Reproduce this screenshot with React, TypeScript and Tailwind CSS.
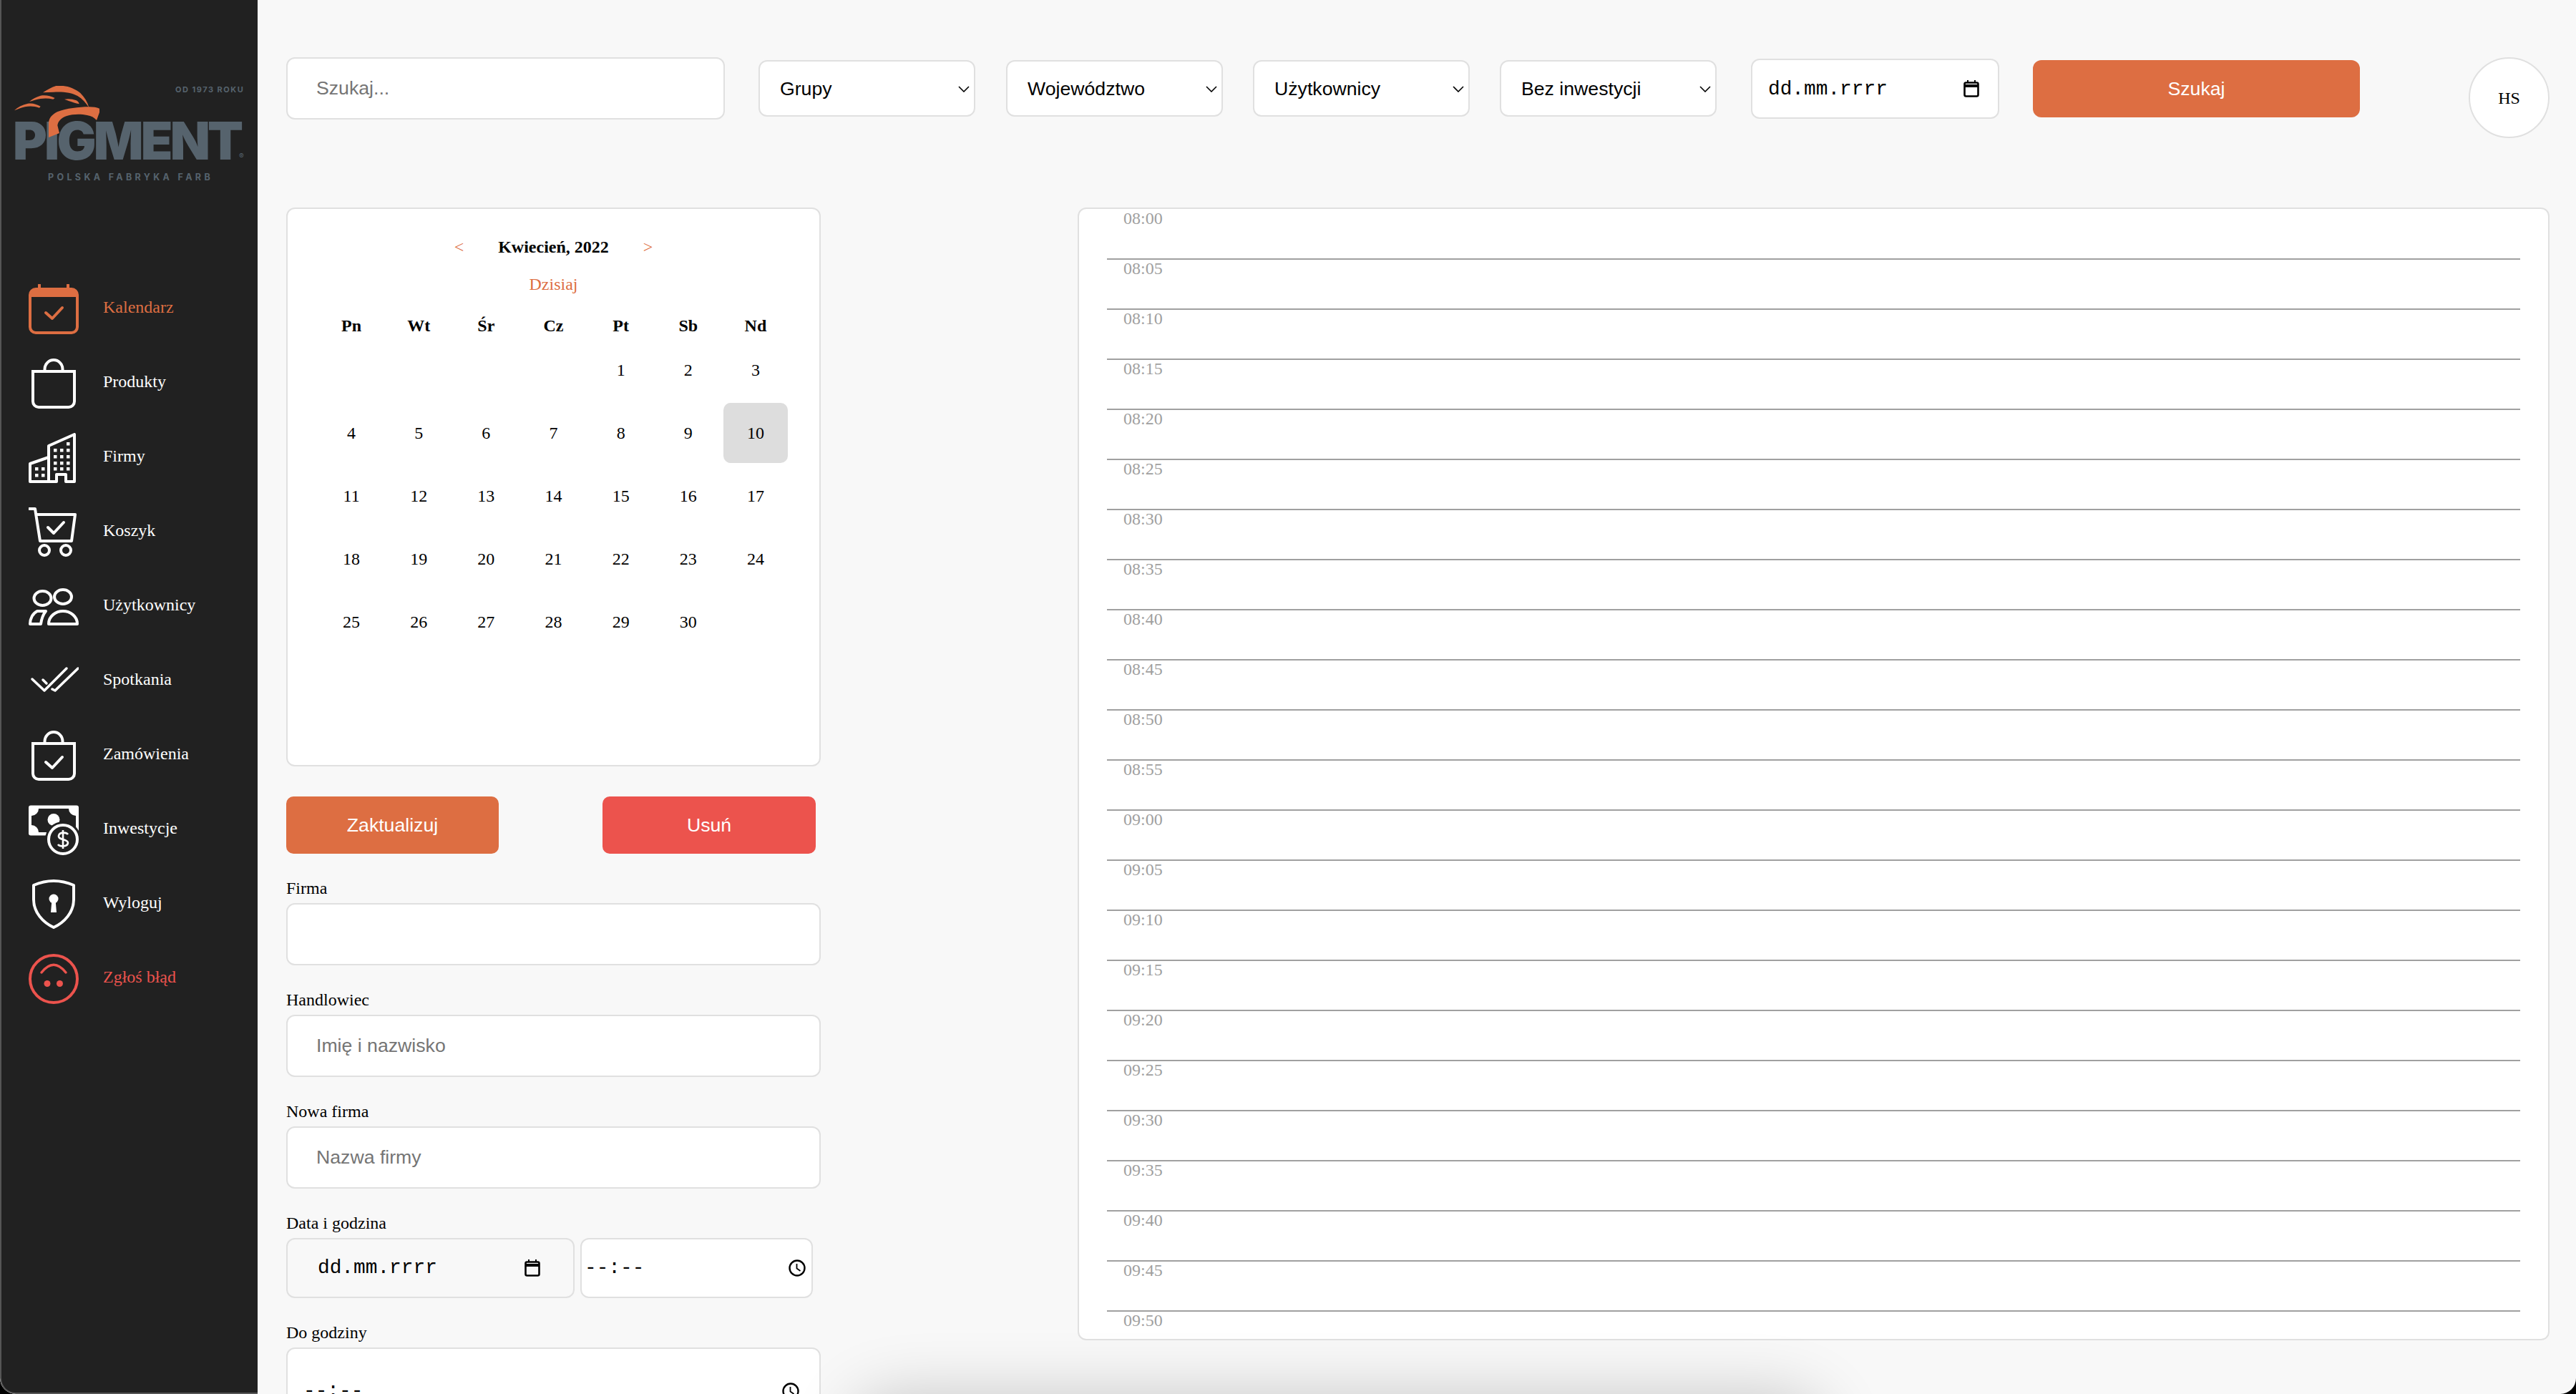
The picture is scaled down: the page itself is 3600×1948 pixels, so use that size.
import React from "react";

const ORANGE = "#dd6e42";

const CheckMark = ({ y = 0 }: { y?: number }) => (
  <path d="M24 40 L33 48 L47 33" transform={`translate(0 ${y})`} fill="none" stroke="currentColor" strokeWidth="4" strokeLinecap="round" strokeLinejoin="round" />
);

function IconBox({ children }: { children: React.ReactNode }) {
  return (
    <svg viewBox="0 0 70 70" className="w-[70px] h-[70px] shrink-0" fill="none" stroke="currentColor" strokeWidth="4">
      {children}
    </svg>
  );
}

const CalendarIcon = () => (
  <IconBox>
    <rect x="2" y="7" width="66" height="61" rx="8" />
    <path d="M2 15a8 8 0 0 1 8-8h50a8 8 0 0 1 8 8v3H2z" fill="currentColor" stroke="none" />
    <path d="M15 1v8M55 1v8" strokeLinecap="round" />
    <CheckMark />
  </IconBox>
);

const BagIcon = ({ check }: { check?: boolean }) => (
  <IconBox>
    <path d="M6 18H64V60a8 8 0 0 1-8 8H14a8 8 0 0 1-8-8Z" />
    <path d="M22.5 18V15a12.5 13 0 0 1 25 0V18" />
    {check && <CheckMark y={4} />}
  </IconBox>
);

const bigWindows = [
  [55, 15], [37, 24], [46, 24], [55, 24], [37, 33], [46, 33], [55, 33],
  [37, 42], [46, 42], [55, 42], [37, 50], [46, 50], [55, 50],
];
const smallWindows = [[11, 50], [20, 50], [11, 59], [20, 59]];

const BuildingIcon = () => (
  <IconBox>
    <path d="M2 68V43L28 34V18L64 2V68H52V58H39V68Z" strokeLinejoin="round" />
    <path d="M28 34V68" />
    {[...bigWindows, ...smallWindows].map(([x, y]) => (
      <rect key={`${x}-${y}`} x={x - 2} y={y - 2} width="4.5" height="4.5" fill="currentColor" stroke="none" />
    ))}
  </IconBox>
);

const CartIcon = () => (
  <IconBox>
    <path d="M1 2H9L16 47H60L65 10H11" strokeLinejoin="round" strokeLinecap="round" />
    <circle cx="22" cy="60" r="7" />
    <circle cx="52" cy="60" r="7" />
    <path d="M27 28L35 36L49 21" strokeLinecap="round" strokeLinejoin="round" />
  </IconBox>
);

const UsersIcon = () => (
  <IconBox>
    <ellipse cx="19.5" cy="23" rx="12" ry="10" />
    <ellipse cx="48" cy="21" rx="12" ry="10" />
    <path d="M2 59C2 51 6 44 12 41H24C20 46 18 52 17 59Z" strokeLinejoin="round" />
    <path d="M28 59C28 48 38 41 48 41C58 41 68 48 68 59Z" strokeLinejoin="round" />
  </IconBox>
);

const DoubleCheckIcon = () => (
  <IconBox>
    <g strokeWidth="3.5" strokeLinecap="round" strokeLinejoin="round">
      <path d="M5 32L22 48L53 17" />
      <path d="M33 46L37 48L69 17" />
      <path d="M20 33L25 38" />
    </g>
  </IconBox>
);

const MoneyIcon = () => (
  <IconBox>
    <g fill="currentColor" stroke="none">
      <rect x="0" y="0.5" width="70" height="42" rx="3" />
      <rect x="4" y="5" width="62" height="33" fill="#212121" />
      <path d="M4 5h10a10 10 0 0 1-10 10z" />
      <path d="M66 5h-10a10 10 0 0 0 10 10z" />
      <path d="M4 38h10a10 10 0 0 0-10-10z" />
      <circle cx="35" cy="20.5" r="8.5" />
      <circle cx="48" cy="48" r="25" fill="#212121" />
    </g>
    <circle cx="48" cy="48" r="20" />
    <path d="M55 41C53 38 43 37 42 43C41 49 55 47 55 53C54 59 43 58 41 55M48 35V61" strokeWidth="2.6" />
  </IconBox>
);

const ShieldIcon = () => (
  <IconBox>
    <path d="M35 2C44 2 56 5 63 8V28C63 46 50 60 35 67C20 60 7 46 7 28V8C14 5 26 2 35 2Z" strokeLinejoin="round" />
    <circle cx="35" cy="27" r="6.5" fill="currentColor" stroke="none" />
    <path d="M32.5 28H37.5L39 46H31Z" fill="currentColor" stroke="none" />
  </IconBox>
);

const BugFaceIcon = () => (
  <IconBox>
    <circle cx="35" cy="35" r="33" />
    <path d="M18 26Q35 4.5 52 26" strokeLinecap="round" strokeWidth="3.5" />
    <circle cx="26" cy="41.5" r="4.5" fill="currentColor" stroke="none" />
    <circle cx="43.5" cy="41.5" r="4.5" fill="currentColor" stroke="none" />
  </IconBox>
);

const navItems = [
  { label: "Kalendarz", icon: <CalendarIcon />, color: "text-[#dd6e42]" },
  { label: "Produkty", icon: <BagIcon />, color: "text-white" },
  { label: "Firmy", icon: <BuildingIcon />, color: "text-white" },
  { label: "Koszyk", icon: <CartIcon />, color: "text-white" },
  { label: "Użytkownicy", icon: <UsersIcon />, color: "text-white" },
  { label: "Spotkania", icon: <DoubleCheckIcon />, color: "text-white" },
  { label: "Zamówienia", icon: <BagIcon check />, color: "text-white" },
  { label: "Inwestycje", icon: <MoneyIcon />, color: "text-white" },
  { label: "Wyloguj", icon: <ShieldIcon />, color: "text-white" },
  { label: "Zgłoś błąd", icon: <BugFaceIcon />, color: "text-[#ec534d]" },
];

function Logo() {
  return (
    <div className="relative h-[397px] font-['Inter',sans-serif] text-[#56636d]">
      <span className="absolute left-[243px] top-[117px] text-[11px] leading-[16px] font-bold tracking-[1.5px] whitespace-nowrap">OD 1973 ROKU</span>
      <span className="absolute left-[16px] top-[153px] text-[73px] leading-[88px] font-black tracking-[-3.8px] whitespace-nowrap">PIGMENT</span>
      <span className="absolute left-[332px] top-[212px] text-[10px] leading-[12px]">®</span>
      <span className="absolute left-[65px] top-[240px] text-[12.5px] leading-[16px] font-bold tracking-[4.35px] whitespace-nowrap">POLSKA FABRYKA FARB</span>
      {/* eagle over the letters */}
      <svg viewBox="0 0 405 270" className="absolute left-[13px] top-[112px] w-[135px] h-[90px]" fill={ORANGE}>
        <path d="M15 127C30 112 50 103 72 98C90 95 108 100 125 110L120 116C100 109 80 108 60 112C44 116 30 122 15 127Z" />
        <path d="M78 90C92 78 108 70 125 65C145 61 168 66 185 75L178 80C160 76 142 75 125 78C108 81 94 86 78 90Z" />
        <path d="M135 52C150 42 170 30 190 24H220C245 26 272 38 292 54C310 72 322 92 328 115C316 96 300 78 280 66C255 52 220 48 180 50C165 50 150 51 135 52Z" />
        <path d="M225 80C240 77 258 78 275 85C282 89 286 94 287 100C272 98 258 92 245 88C238 85 232 83 225 80Z" />
        <path d="M328 112C345 112 360 114 372 119V135L360 168C352 158 338 150 320 147C295 142 260 142 235 150C212 158 198 172 196 190L204 222L159 240V180C160 160 172 145 195 133C235 118 285 112 328 112Z" />
      </svg>
    </div>
  );
}

function Sidebar() {
  return (
    <aside className="w-[360px] shrink-0 h-full bg-[#212121] border-l-2 border-b-2 border-[#555555] rounded-bl-[22px] overflow-hidden">
      <Logo />
      <nav className="flex flex-col gap-[34px] pl-[38px]">
        {navItems.map((item) => (
          <a key={item.label} className={`flex items-center h-[70px] ${item.color}`}>
            {item.icon}
            <span className="ml-[34px] text-[24px] leading-[28px] -mt-[6px]">{item.label}</span>
          </a>
        ))}
      </nav>
    </aside>
  );
}

const boxCls = "bg-white border-2 border-[#e0e0e0] rounded-[12px]";
const sansCls = "font-['Liberation_Sans',sans-serif] text-[26.67px]";
const monoCls = "font-['Liberation_Mono',monospace] text-[27.8px] text-black";

function Select({ label, className }: { label: string; className: string }) {
  return (
    <div className={`relative w-[303px] h-[79px] shrink-0 ${className}`}>
      <select className={`${boxCls} ${sansCls} appearance-none w-full h-full pl-[28px] text-black outline-none`}>
        <option>{label}</option>
      </select>
      <svg viewBox="0 0 16 9" className="absolute right-[8px] top-[36px] w-[16px] h-[9px]" fill="none" stroke="black" strokeWidth="1.6">
        <path d="M1 1L8 8L15 1" />
      </svg>
    </div>
  );
}

const CalendarGlyph = () => (
  <svg viewBox="0 0 22 24" className="w-[22px] h-[24px]" fill="none" stroke="black" strokeWidth="2.6">
    <rect x="1.5" y="3.5" width="19" height="19" rx="2" />
    <path d="M1.5 8H20.5" strokeWidth="4" />
    <path d="M6 0V4M16 0V4" strokeWidth="2" />
  </svg>
);

const ClockGlyph = () => (
  <svg viewBox="0 0 24 24" className="w-[24px] h-[24px]" fill="none" stroke="black" strokeWidth="2.4">
    <circle cx="12" cy="12" r="10.5" />
    <path d="M11.5 6V12.5L16.5 16" strokeWidth="1.8" />
  </svg>
);

function Header() {
  return (
    <header className="h-[290px] shrink-0 pt-[80px] flex items-start">
      <div className="flex items-center h-[87px]">
        <input placeholder="Szukaj..." className={`${boxCls} ${sansCls} w-[613px] h-[87px] pl-[40px] placeholder:text-[#757575] outline-none`} />
        <Select label="Grupy" className="ml-[47px]" />
        <Select label="Województwo" className="ml-[43px]" />
        <Select label="Użytkownicy" className="ml-[42px]" />
        <Select label="Bez inwestycji" className="ml-[42px]" />
        <div className={`${boxCls} ml-[48px] w-[347px] h-[84px] flex items-center justify-between pl-[22px] pr-[26px]`}>
          <span className={`${monoCls} mt-[3px]`}>dd.mm.rrrr</span>
          <CalendarGlyph />
        </div>
        <button className={`${sansCls} ml-[47px] w-[457px] h-[80px] rounded-[12px] bg-[#dd6e42] text-white`}>Szukaj</button>
      </div>
      <div className="ml-[152px] w-[113px] h-[113px] rounded-full bg-white border-2 border-[#e0e0e0] flex items-center justify-center text-[24px] text-black">HS</div>
    </header>
  );
}

const weekDays = ["Pn", "Wt", "Śr", "Cz", "Pt", "Sb", "Nd"];
const days: (number | null)[] = [null, null, null, null, ...Array.from({ length: 30 }, (_, i) => i + 1)];

function Calendar() {
  return (
    <div className={`${boxCls} h-[781px] pt-[39px] px-[42px] text-[24px] leading-[28px] text-center text-black`}>
      <div className="flex justify-center items-center gap-12">
        <span className="text-[#dd6e42]">&lt;</span>
        <span className="font-bold">Kwiecień, 2022</span>
        <span className="text-[#dd6e42]">&gt;</span>
      </div>
      <div className="mt-6 text-[#dd6e42]">Dzisiaj</div>
      <div className="mt-[30px] grid grid-cols-7 font-bold">
        {weekDays.map((d) => (
          <div key={d}>{d}</div>
        ))}
      </div>
      <div className="mt-[4px] grid grid-cols-7 auto-rows-[88px]">
        {days.map((d, i) => (
          <div key={i} className={`my-[2px] mx-[2px] rounded-[10px] flex items-center justify-center ${d === 10 ? "bg-[#dddddd]" : ""}`}>
            {d}
          </div>
        ))}
      </div>
    </div>
  );
}

function Field({ label, children }: { label: string; children: React.ReactNode }) {
  return (
    <div className="mt-[34px]">
      <div className="text-[24px] leading-[28px] text-black">{label}</div>
      <div className="mt-[7px]">{children}</div>
    </div>
  );
}

const textInput = `${boxCls} ${sansCls} w-full h-[87px] pl-[40px] placeholder:text-[#757575] outline-none`;

function EventForm() {
  return (
    <div>
      <div className="mt-[42px] w-[740px] flex justify-between">
        <button className={`${sansCls} w-[297px] h-[80px] rounded-[10px] bg-[#dd6e42] text-white`}>Zaktualizuj</button>
        <button className={`${sansCls} w-[298px] h-[80px] rounded-[10px] bg-[#ec534d] text-white`}>Usuń</button>
      </div>
      <Field label="Firma">
        <input className={textInput} />
      </Field>
      <Field label="Handlowiec">
        <input className={textInput} placeholder="Imię i nazwisko" />
      </Field>
      <Field label="Nowa firma">
        <input className={textInput} placeholder="Nazwa firmy" />
      </Field>
      <Field label="Data i godzina">
        <div className="flex gap-[8px]">
          <div className="w-[403px] h-[84px] rounded-[12px] border-2 border-[#e0e0e0] bg-[#f8f8f8] flex items-center justify-between pl-[42px] pr-[46px]">
            <span className={monoCls}>dd.mm.rrrr</span>
            <CalendarGlyph />
          </div>
          <div className={`${boxCls} w-[325px] h-[84px] flex items-center justify-between pl-[4px] pr-[8px]`}>
            <span className={monoCls}>--:--</span>
            <ClockGlyph />
          </div>
        </div>
      </Field>
      <Field label="Do godziny">
        <div className={`${boxCls} h-[122px] flex items-center justify-between pl-[22px] pr-[28px]`}>
          <span className={monoCls}>--:--</span>
          <ClockGlyph />
        </div>
      </Field>
    </div>
  );
}

const slots = Array.from({ length: 23 }, (_, i) => {
  const total = 8 * 60 + i * 5;
  const h = String(Math.floor(total / 60)).padStart(2, "0");
  const m = String(total % 60).padStart(2, "0");
  return `${h}:${m}`;
});

function Schedule() {
  return (
    <div className={`${boxCls} w-[2057px] h-[1583px] overflow-hidden px-[39px] pt-[1px]`}>
      {slots.map((t, i) => (
        <div key={t} className={`h-[70px] pl-[23px] text-[24px] leading-[25px] text-[#a0a0a0] ${i < slots.length - 1 ? "border-b-2 border-[#a0a0a0]" : ""}`}>
          {t}
        </div>
      ))}
    </div>
  );
}

export default function App() {
  return (
    <div className="w-[3600px] h-[1948px] bg-black overflow-hidden font-['Liberation_Serif',serif]">
      <div className="relative w-full h-full flex rounded-b-[22px] overflow-hidden bg-[#f8f8f8]">
        <Sidebar />
        <main className="flex-1 min-w-0 h-full pl-[40px] pr-[37px] flex flex-col">
          <Header />
          <div className="flex justify-between items-start">
            <section className="w-[747px]">
              <Calendar />
              <EventForm />
            </section>
            <Schedule />
          </div>
        </main>
        {/* shadow of a card sitting just below the fold */}
        <div className="absolute left-[1240px] top-[2000px] w-[1260px] h-[100px] rounded-[20px] shadow-[0_0_90px_50px_rgba(0,0,0,0.2)]" />
      </div>
    </div>
  );
}
